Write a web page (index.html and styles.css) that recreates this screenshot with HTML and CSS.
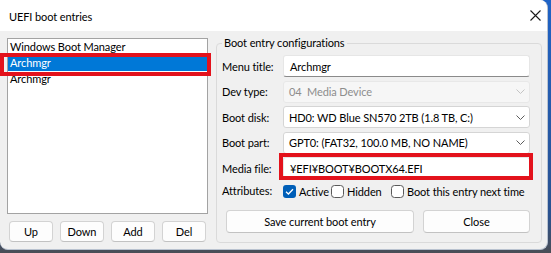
FILE: index.html
```html
<!DOCTYPE html>
<html lang="en">
<head>
  <meta charset="UTF-8">
  <title>UEFI boot entries</title>
  <link rel="stylesheet" href="styles.css">
</head>
<body>
  <div class="window">
    <div class="titlebar">
      <span class="title">UEFI boot entries</span>
      <svg class="close" width="11" height="11" viewBox="0 0 11 11">
        <path d="M0.5 0.5 L10.5 10.5 M10.5 0.5 L0.5 10.5" stroke="#1a1a1a" stroke-width="1.1" fill="none"/>
      </svg>
    </div>

    <div class="content">
      <div class="left">
        <ul class="list">
          <li>Windows Boot Manager</li>
          <li class="selected">Archmgr</li>
          <li>Archmgr</li>
        </ul>
        <div class="list-buttons">
          <button class="btn">Up</button>
          <button class="btn">Down</button>
          <button class="btn">Add</button>
          <button class="btn">Del</button>
        </div>
      </div>

      <fieldset class="group">
        <legend>Boot entry configurations</legend>
        <div class="form">
          <label>Menu title:</label>
          <div class="field input">Archmgr</div>

          <label>Dev type:</label>
          <div class="field combo disabled">
            <span>04&nbsp; Media Device</span>
            <svg class="chevron" width="9" height="5" viewBox="0 0 9 5"><path d="M0.5 0.5 L4.5 4.5 L8.5 0.5" stroke="#c4c4c4" fill="none"/></svg>
          </div>

          <label>Boot disk:</label>
          <div class="field combo">
            <span>HD0: WD Blue SN570 2TB (1.8 TB, C:)</span>
            <svg class="chevron" width="9" height="5" viewBox="0 0 9 5"><path d="M0.5 0.5 L4.5 4.5 L8.5 0.5" stroke="#5c5c5c" fill="none"/></svg>
          </div>

          <label>Boot part:</label>
          <div class="field combo">
            <span>GPT0: (FAT32, 100.0 MB, NO NAME)</span>
            <svg class="chevron" width="9" height="5" viewBox="0 0 9 5"><path d="M0.5 0.5 L4.5 4.5 L8.5 0.5" stroke="#5c5c5c" fill="none"/></svg>
          </div>

          <label>Media file:</label>
          <div class="field input">¥EFI¥BOOT¥BOOTX64.EFI</div>

          <label>Attributes:</label>
          <div class="checks">
            <span class="check check-active">
              <svg width="13" height="13" viewBox="0 0 13 13"><rect x="0" y="0" width="13" height="13" rx="3" fill="#005fb8"/><path d="M3 6.8 L5.4 9 L10 4.2" stroke="#fff" stroke-width="1.3" fill="none"/></svg>
              Active
            </span>
            <span class="check check-hidden">
              <svg width="13" height="13" viewBox="0 0 13 13"><rect x="0.5" y="0.5" width="12" height="12" rx="3" fill="#fff" stroke="#5a5a5a"/></svg>
              Hidden
            </span>
            <span class="check">
              <svg width="13" height="13" viewBox="0 0 13 13"><rect x="0.5" y="0.5" width="12" height="12" rx="3" fill="#fff" stroke="#5a5a5a"/></svg>
              Boot this entry next time
            </span>
          </div>
        </div>

        <div class="actions">
          <button class="btn btn-save">Save current boot entry</button>
          <button class="btn btn-close">Close</button>
        </div>
      </fieldset>
    </div>

    <!-- red annotation boxes -->
    <div class="mark mark-list"></div>
    <div class="mark mark-file"></div>
  </div>
</body>
</html>
```

FILE: styles.css
```css
body {
  margin: 0;
  width: 551px;
  height: 253px;
  overflow: hidden;
  background: linear-gradient(to bottom, #1f63c6 0%, #2a5290 85%, #4a4d55 100%);
  font-family: Lato, 'Noto Sans', sans-serif;
  font-size: 11px;
  letter-spacing: -0.1px;
  color: #000;
}

.window {
  position: relative;
  width: 548px;
  height: 250px;
  background: #f0f0f0;
  border-radius: 0 8px 8px 8px;
  overflow: hidden;
  box-sizing: border-box;
  border-right: 1px solid #b9c2cf;
  border-bottom: 1px solid #b9c2cf;
}

.titlebar {
  height: 31px;
  background: #fff;
  display: flex;
  align-items: center;
  justify-content: space-between;
  padding: 0 6px 0 9px;
}

.title {
  font-size: 11px;
  margin-top: 1px;
}

.content {
  display: flex;
  gap: 8px;
  padding: 7px 0 0 7px;
}

.left {
  width: 201px;
  display: flex;
  flex-direction: column;
  gap: 7px;
}

.list {
  list-style: none;
  margin: 0;
  padding: 0;
  height: 176px;
  box-sizing: border-box;
  background: #fff;
  border: 1px solid #a3a3a3;
}

.list li {
  height: 16px;
  line-height: 16px;
  padding-left: 2px;
}

.list li.selected {
  background: #0078d7;
  color: #fff;
}

.list-buttons {
  display: flex;
  justify-content: space-between;
  padding: 0 2px;
}

.btn {
  font-family: inherit;
  font-size: 11px;
  letter-spacing: -0.1px;
  color: #000;
  background: #fdfdfd;
  border: 1px solid #d3d3d3;
  border-bottom-color: #c2c2c2;
  border-radius: 4px;
  padding: 0;
  box-sizing: border-box;
}

.list-buttons .btn {
  width: 44px;
  height: 21px;
}

.group {
  margin: -3px 0 0 0;
  padding: 4px 10px 9px 5px;
  width: 326px;
  box-sizing: border-box;
  border: 1px solid #dadada;
  border-radius: 4px;
}

.group legend {
  padding: 0 2px;
  line-height: 16px;
}

.form {
  display: grid;
  grid-template-columns: 61px 247px;
  row-gap: 3.5px;
  align-items: center;
}

.field {
  height: 22px;
  box-sizing: border-box;
  display: flex;
  align-items: center;
  padding: 0 6px;
  background: #fff;
  border-radius: 3px;
  white-space: nowrap;
}

.input {
  border: 1px solid #e6e6e6;
  border-bottom-color: #8a8a8a;
}

.combo {
  justify-content: space-between;
  padding: 0 4px 0 5px;
  border: 1px solid #d5d5d5;
}

.combo.disabled {
  background: #f6f6f6;
  border-color: #e8e8e8;
  color: #8d8d8d;
}

.checks {
  display: flex;
  align-items: center;
  height: 16px;
  margin-top: 0.5px;
  white-space: nowrap;
}

.check {
  display: flex;
  align-items: center;
  gap: 3px;
}

.check-active {
  width: 48px;
}

.check-hidden {
  width: 60px;
}

.actions {
  display: flex;
  gap: 9px;
  margin: 11px 0 0 4px;
}

.actions .btn {
  height: 23px;
}

.btn-save {
  width: 188px;
}

.btn-close {
  width: 107px;
}

.mark {
  position: absolute;
  border: 4px solid #e3121c;
  box-sizing: border-box;
}

.mark-list {
  left: 0;
  top: 53px;
  width: 211px;
  height: 23px;
}

.mark-file {
  left: 279px;
  top: 153px;
  width: 254px;
  height: 27px;
}
```
